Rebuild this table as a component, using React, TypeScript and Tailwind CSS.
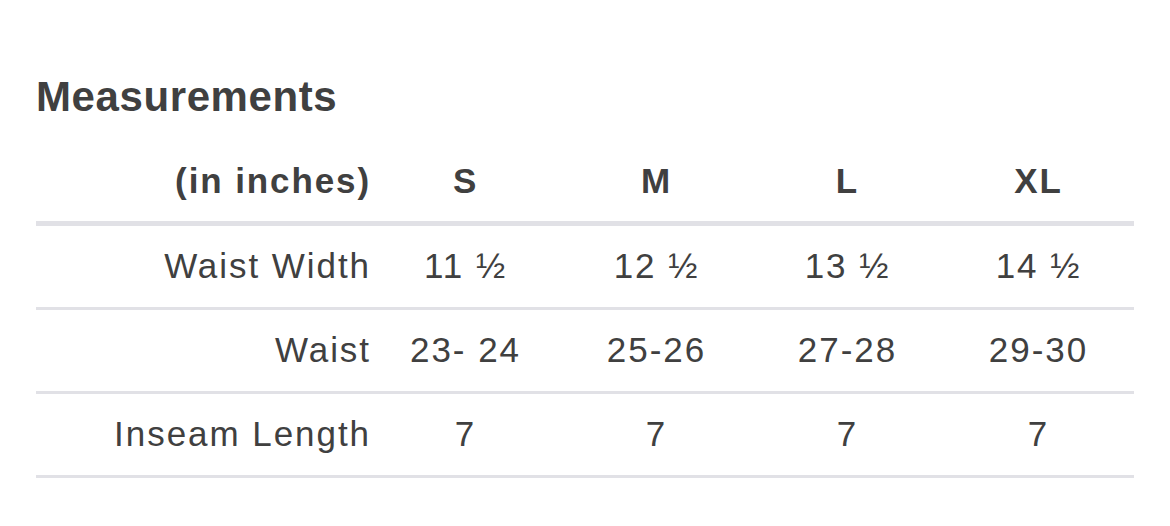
const sizes = ["S", "M", "L", "XL"];

const rows = [
  { label: "Waist Width", values: ["11 ½", "12 ½", "13 ½", "14 ½"] },
  { label: "Waist", values: ["23- 24", "25-26", "27-28", "29-30"] },
  { label: "Inseam Length", values: ["7", "7", "7", "7"] },
];

export default function App() {
  return (
    <div className="min-h-[526px] bg-white px-9 pt-[76px] text-[#404040] font-['Liberation_Sans',Arial,sans-serif]">
      <h2 className="text-[42px] leading-[42px] font-bold tracking-[0.6px]">Measurements</h2>

      <div className="mt-[24px]">
        {/* header */}
        <div className="grid grid-cols-[334px_repeat(4,1fr)] h-[84px] items-center border-b-[5px] border-[#e1e1e6] text-[35px] font-bold tracking-[1.9px]">
          <div className="text-right -mr-[1px]">(in inches)</div>
          {sizes.map((s) => (
            <div key={s} className="text-center">
              {s}
            </div>
          ))}
        </div>

        {rows.map((r) => (
          <div
            key={r.label}
            className="grid grid-cols-[334px_repeat(4,1fr)] h-[84px] items-center border-b-[3px] border-[#e1e1e6] text-[35px] tracking-[1.95px]"
          >
            <div className="text-right -mr-[1px]">{r.label}</div>
            {r.values.map((v, i) => (
              <div key={i} className="text-center">
                {v}
              </div>
            ))}
          </div>
        ))}
      </div>
    </div>
  );
}
